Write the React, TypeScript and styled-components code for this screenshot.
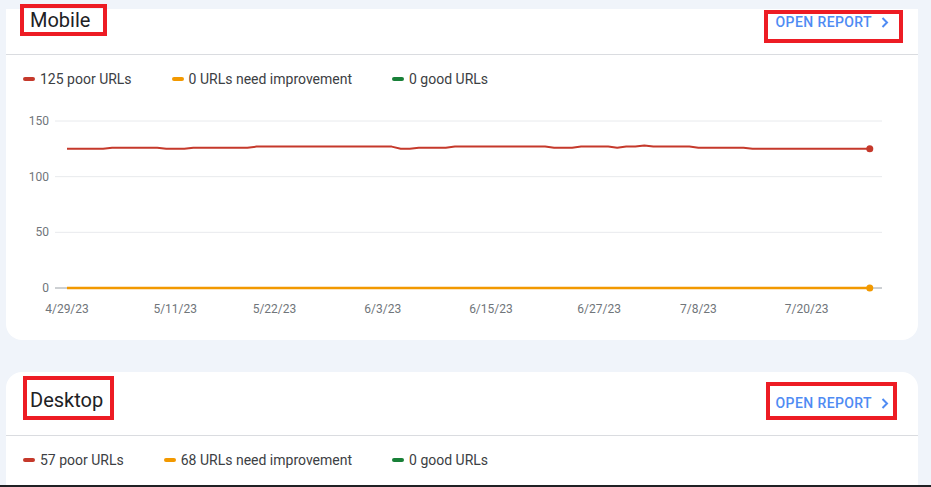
import styled, { createGlobalStyle } from 'styled-components';

const GlobalStyle = createGlobalStyle`
  html, body {
    margin: 0;
    padding: 0;
    background: #f0f4fa;
    font-family: Roboto, "Liberation Sans", Arial, sans-serif;
  }
`;

const Page = styled.div`
  position: relative;
  height: 487px;
  overflow: hidden;
  box-sizing: border-box;
  padding: 9px 13px 0 6px;
  display: flex;
  flex-direction: column;
  gap: 32px;

  &::after {
    content: '';
    position: absolute;
    left: 0;
    right: 0;
    bottom: 0;
    height: 2px;
    background: #202124;
  }
`;

const Card = styled.section<{ $radius: string }>`
  flex-shrink: 0;
  background: #fff;
  border-radius: ${(p) => p.$radius};
  padding-bottom: 15px;
`;

const Header = styled.div<{ $height: number }>`
  display: flex;
  justify-content: space-between;
  align-items: flex-start;
  height: ${(p) => p.$height}px;
  border-bottom: 1px solid #dadce0;
`;

// red annotation box drawn round the title
const Title = styled.h2<{ $pad: string; $margin: string; $lh: number }>`
  margin: ${(p) => p.$margin};
  padding: ${(p) => p.$pad};
  font-size: 20px;
  font-weight: 400;
  line-height: ${(p) => p.$lh}px;
  color: #202124;
  outline: 4px solid #ed1c24;
`;

const ReportLink = styled.a<{ $pad: string; $margin: string }>`
  display: flex;
  align-items: flex-start;
  gap: 9px;
  margin: ${(p) => p.$margin};
  padding: ${(p) => p.$pad};
  font-size: 14px;
  font-weight: 500;
  line-height: 16px;
  letter-spacing: 0.4px;
  color: #4f8bf3;
  text-decoration: none;
  outline: 4px solid #ed1c24;
  cursor: pointer;

  svg {
    margin-top: 3px;
  }
`;

const Legend = styled.div<{ $top: number }>`
  display: flex;
  gap: 40px;
  padding: ${(p) => p.$top}px 0 0 17px;
`;

const LegendItem = styled.div`
  display: flex;
  align-items: center;
  gap: 5px;
  font-size: 14px;
  line-height: 20px;
  color: #3c4043;
`;

const Swatch = styled.span<{ $color: string }>`
  width: 12px;
  height: 4px;
  border-radius: 2px;
  background: ${(p) => p.$color};
`;

const ChartSvg = styled.svg`
  display: block;
  margin-top: 11px;

  text {
    font-family: Roboto, "Liberation Sans", Arial, sans-serif;
    font-size: 12px;
    fill: #70757a;
  }
`;

const RED = '#c5392b';
const ORANGE = '#f29900';
const GREEN = '#188038';

function Chevron() {
  return (
    <svg width="8" height="11" viewBox="0 0 8 11">
      <polyline points="1.5,1 6,5.5 1.5,10" fill="none" stroke="currentColor" strokeWidth="2" />
    </svg>
  );
}

// values per day, 4/29/23 .. 7/27/23
const runs: [number, number][] = [
  [5, 125], [6, 126], [3, 125], [7, 126], [16, 127], [2, 125], [4, 126],
  [11, 127], [3, 126], [4, 127], [1, 126], [2, 127], [1, 128], [5, 127],
  [6, 126], [14, 125],
];
const poorSeries = runs.flatMap(([n, v]) => Array(n).fill(v) as number[]);

const X0 = 61;
const DAY = 9.02;
const Y0 = 188;
const UNIT = 167 / 150;
const xOf = (i: number) => X0 + i * DAY;
const yOf = (v: number) => Y0 - v * UNIT;

const ticks = [
  { label: '4/29/23', day: 0 },
  { label: '5/11/23', day: 12 },
  { label: '5/22/23', day: 23 },
  { label: '6/3/23', day: 35 },
  { label: '6/15/23', day: 47 },
  { label: '6/27/23', day: 59 },
  { label: '7/8/23', day: 70 },
  { label: '7/20/23', day: 82 },
];

function Chart() {
  const last = poorSeries.length - 1;
  const pts = poorSeries.map((v, i) => `${xOf(i).toFixed(1)},${yOf(v).toFixed(1)}`).join(' ');
  return (
    <ChartSvg width="912" height="225" viewBox="0 0 912 225">
      {[150, 100, 50].map((v) => (
        <g key={v}>
          <line x1="49" x2="876" y1={yOf(v)} y2={yOf(v)} stroke="#e8eaed" strokeWidth="1" />
          <text x="43" y={yOf(v) + 4} textAnchor="end">{v}</text>
        </g>
      ))}
      <line x1="49" x2="876" y1={Y0} y2={Y0} stroke="#9aa0a6" strokeWidth="1" />
      <text x="43" y={Y0 + 4} textAnchor="end">0</text>
      {ticks.map((t) => (
        <text key={t.label} x={xOf(t.day)} y="213" textAnchor="middle">{t.label}</text>
      ))}
      <line x1={xOf(0)} x2={xOf(last)} y1={Y0} y2={Y0} stroke={ORANGE} strokeWidth="2.5" />
      <circle cx={xOf(last)} cy={Y0} r="3.5" fill={ORANGE} />
      <polyline points={pts} fill="none" stroke={RED} strokeWidth="2" strokeLinejoin="round" />
      <circle cx={xOf(last)} cy={yOf(poorSeries[last])} r="3.5" fill={RED} />
    </ChartSvg>
  );
}

interface LegendProps {
  poor: number;
  improve: number;
  good: number;
  top: number;
}

function StatusLegend({ poor, improve, good, top }: LegendProps) {
  return (
    <Legend $top={top}>
      <LegendItem><Swatch $color={RED} />{poor} poor URLs</LegendItem>
      <LegendItem><Swatch $color={ORANGE} />{improve} URLs need improvement</LegendItem>
      <LegendItem><Swatch $color={GREEN} />{good} good URLs</LegendItem>
    </Legend>
  );
}

export default function App() {
  return (
    <>
      <GlobalStyle />
      <Page>
        <Card $radius="0 0 16px 16px">
          <Header $height={45}>
            <Title $margin="-1px 0 0 18px" $pad="0 13px 0 6px" $lh={24}>Mobile</Title>
            <ReportLink $margin="5px 19px 0 0" $pad="0 10px 9px 8px">
              OPEN REPORT <Chevron />
            </ReportLink>
          </Header>
          <StatusLegend poor={125} improve={0} good={0} top={14} />
          <Chart />
        </Card>

        <Card $radius="16px 16px 0 0">
          <Header $height={63}>
            <Title $margin="8px 0 0 21px" $pad="5px 7px 0 3px" $lh={31}>Desktop</Title>
            <ReportLink $margin="14px 25px 0 0" $pad="9px 4px 5px 6px">
              OPEN REPORT <Chevron />
            </ReportLink>
          </Header>
          <StatusLegend poor={57} improve={68} good={0} top={14} />
        </Card>
      </Page>
    </>
  );
}
